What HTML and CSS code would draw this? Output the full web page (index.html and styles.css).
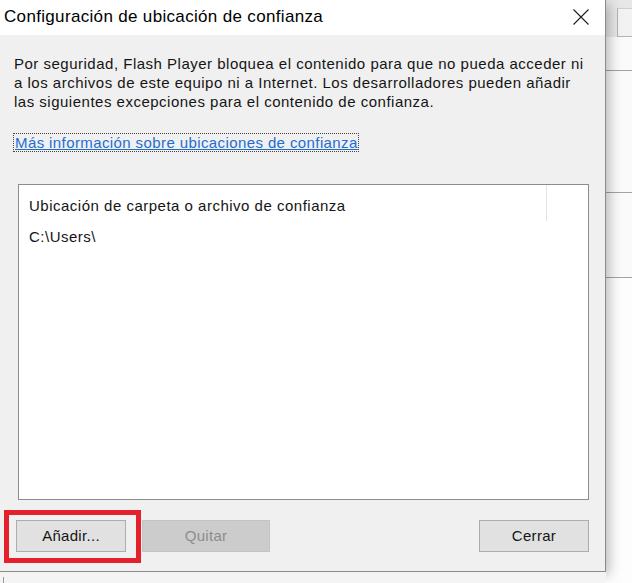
FILE: index.html
```html
<!DOCTYPE html>
<html lang="es">
<head>
<meta charset="utf-8">
<title>Configuración de ubicación de confianza</title>
<link rel="stylesheet" href="styles.css">
</head>
<body>
<div class="desktop">
  <div class="left-col">
    <div class="dialog">
      <div class="titlebar">
        <span class="title">Configuración de ubicación de confianza</span>
        <svg class="close" width="16" height="16" viewBox="0 0 16 16" aria-hidden="true">
          <path d="M0.5 0.5 L15.5 15.5 M15.5 0.5 L0.5 15.5" stroke="#1e1e1e" stroke-width="1.1" fill="none"/>
        </svg>
      </div>
      <div class="content">
        <p class="intro">Por seguridad, Flash Player bloquea el contenido para que no pueda acceder ni<br>a los archivos de este equipo ni a Internet. Los desarrolladores pueden añadir<br>las siguientes excepciones para el contenido de confianza.</p>
        <div class="link-row"><a class="link" href="#">Más información sobre ubicaciones de confianza</a></div>
        <div class="listbox">
          <div class="list-header">
            <div class="col-main">Ubicación de carpeta o archivo de confianza</div>
            <div class="col-rest"></div>
          </div>
          <div class="list-row">C:\Users\</div>
        </div>
        <div class="buttons">
          <div class="btn-wrap">
            <button class="btn">Añadir...</button>
            <div class="highlight"></div>
          </div>
          <button class="btn btn-disabled" disabled>Quitar</button>
          <div class="spacer"></div>
          <button class="btn">Cerrar</button>
        </div>
      </div>
    </div>
    <div class="under"><div class="under-line"></div></div>
  </div>
  <div class="right-col">
    <div class="bg-tabs"><div class="bg-tab"></div></div>
    <div class="bg-band band1"></div>
    <div class="bg-band band2"></div>
    <div class="bg-band band3"></div>
    <div class="bg-rest"></div>
  </div>
</div>
</body>
</html>
```
FILE: styles.css
```css
html, body {
  margin: 0;
  padding: 0;
}
body {
  width: 632px;
  height: 583px;
  overflow: hidden;
  background: #f7f7f7;
  font-family: "Liberation Sans", Arial, sans-serif;
  color: #1a1a1a;
}
.desktop {
  display: flex;
  width: 632px;
  height: 583px;
}
.left-col {
  width: 606px;
  display: flex;
  flex-direction: column;
  position: relative;
  z-index: 2;
}
.dialog {
  width: 605px;
  height: 571px;
  border-right: 1px solid #8a8a8a;
  border-bottom: 1px solid #8a8a8a;
  background: #f0f0f0;
  display: flex;
  flex-direction: column;
  box-shadow: 3px 3px 12px rgba(0, 0, 0, 0.28);
}
.titlebar {
  height: 35px;
  background: #ffffff;
  display: flex;
  align-items: center;
  padding-left: 4px;
  padding-right: 16px;
  flex: none;
}
.title {
  font-size: 17px;
  letter-spacing: 0.33px;
  color: #000;
  flex: 1;
  padding-bottom: 1px;
}
.close {
  display: block;
  margin-top: -2px;
}
.content {
  flex: 1;
  padding: 19px 16px 0 14px;
  display: flex;
  flex-direction: column;
}
.intro {
  margin: 0;
  font-size: 15px;
  line-height: 19px;
  letter-spacing: 0.5px;
  color: #151515;
}
.link-row {
  margin-top: 22px;
  line-height: 19px;
  font-size: 15px;
  letter-spacing: 0.4px;
}
.link {
  color: #1e6ed0;
  text-decoration: underline;
  outline: 1px dotted #444;
  padding: 0 0 0 1px;
}
.listbox {
  margin-top: 32px;
  margin-left: 4px;
  width: 569px;
  height: 314px;
  background: #ffffff;
  border: 1px solid #8c8c8c;
  font-size: 15px;
  line-height: 19px;
  letter-spacing: 0.5px;
  color: #151515;
}
.list-header {
  display: flex;
  height: 36px;
}
.col-main {
  width: 517px;
  padding: 11px 0 0 10px;
  border-right: 1px solid #e3e3e3;
  box-sizing: content-box;
  height: 25px;
}
.col-rest {
  flex: 1;
}
.list-row {
  padding: 6px 0 0 10px;
}
.buttons {
  margin-top: 20px;
  display: flex;
  align-items: flex-start;
  gap: 16px;
  padding-left: 2px;
}
.btn-wrap {
  position: relative;
}
.btn {
  display: block;
  height: 32px;
  width: 110px;
  margin: 0;
  padding: 0 0 2px;
  border: 1px solid #adadad;
  background: #e1e1e1;
  font-family: "Liberation Sans", Arial, sans-serif;
  font-size: 15px;
  letter-spacing: 0.3px;
  color: #151515;
  border-radius: 0;
}
.btn-disabled {
  width: 128px;
  background: #cccccc;
  border-color: #c4c4c4;
  color: #8d8d8d;
}
.spacer {
  flex: 1;
}
.highlight {
  position: absolute;
  left: -12px;
  top: -10px;
  width: 127px;
  height: 43px;
  border: 5px solid #e3202b;
  pointer-events: none;
}
.under {
  flex: 1;
  background: #f4f4f4;
  padding-left: 3px;
  padding-top: 5px;
  display: flex;
}
.under-line {
  width: 1px;
  background: #9a9a9a;
}
.right-col {
  flex: 1;
  display: flex;
  flex-direction: column;
  background: #fbfbfb;
}
.bg-tabs {
  height: 37px;
  background: #e7e7e7;
  padding-left: 11px;
  padding-top: 8px;
  box-sizing: border-box;
  display: flex;
}
.bg-tab {
  flex: 1;
  border-left: 1px solid #b4b4b4;
  border-top: 1px solid #cfcfcf;
  border-bottom: 1px solid #b4b4b4;
  background: #f2f2f2;
}
.bg-band {
  border-bottom: 1px solid #a3a3a3;
  background: #fafafa;
}
.band1 { height: 33px; }
.band2 { height: 121px; }
.band3 { height: 84px; }
.bg-rest {
  flex: 1;
  background: #fdfdfd;
}
```
